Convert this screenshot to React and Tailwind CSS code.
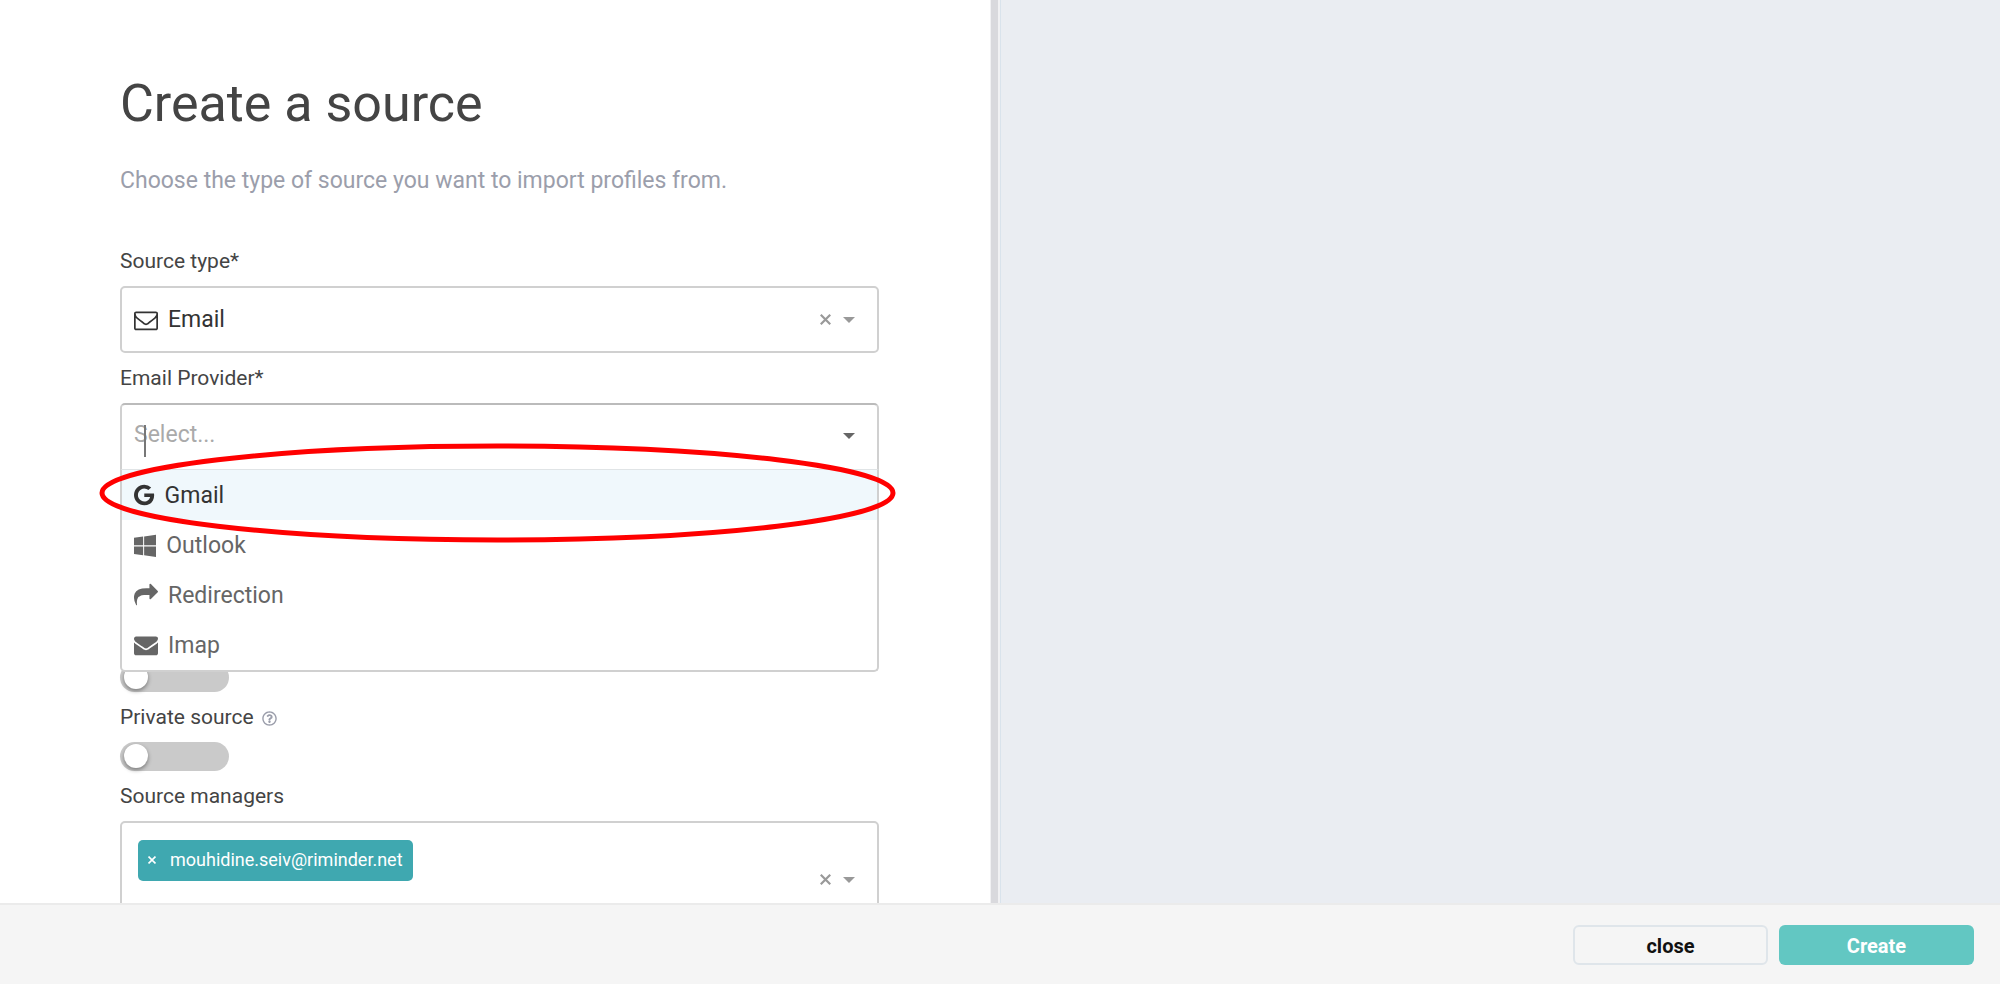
import { useState } from "react";
import { FaRegQuestionCircle } from "react-icons/fa";

const ICONS = {
  email: {
    viewBox: "0 0 1792 1792",
    d: "M1664 1504v-768q-32 36-69 66-268 206-426 338-51 43-83 67t-86.5 48.5-102.5 24.5h-2q-48 0-102.5-24.5t-86.5-48.5-83-67q-158-132-426-338-37-30-69-66v768q0 13 9.5 22.5t22.5 9.5h1472q13 0 22.5-9.5t9.5-22.5zm0-1051v-24.5l-.5-13-3-12.5-5.5-9-9-7.5-14-2.5h-1472q-13 0-22.5 9.5t-9.5 22.5q0 168 147 284 193 152 401 317 6 5 35 29.5t46 37.5 44.5 31.5 50.5 27.5 43 9h2q20 0 43-9t50.5-27.5 44.5-31.5 46-37.5 35-29.5q208-165 401-317 54-43 100.5-115.5t46.5-131.5zm128-37v1088q0 66-47 113t-113 47h-1472q-66 0-113-47t-47-113v-1088q0-66 47-113t113-47h1472q66 0 113 47t47 113z",
  },
  google: {
    viewBox: "128 0 1536 1792",
    d: "M896 786h725q12 67 12 128 0 217-91 387.5t-259.5 266.5-386.5 96q-157 0-299-60.5t-245-163.5-163.5-245-60.5-299 60.5-299 163.5-245 245-163.5 299-60.5q300 0 515 201l-209 201q-123-119-306-119-129 0-238.5 65t-173.5 176.5-64 243.5 64 243.5 173.5 176.5 238.5 65q87 0 160-24t120-60 82-82 51.5-87 22.5-78h-436v-264z",
  },
  windows: {
    viewBox: "64 0 1664 1792",
    d: "M746 1006v651l-682-94v-557h682zm0-743v659h-682v-565zm982 743v786l-907-125v-661h907zm0-878v794h-907v-669z",
  },
  share: {
    viewBox: "0 0 1792 1792",
    d: "M1792 640q0 26-19 45l-512 512q-19 19-45 19t-45-19-19-45v-256h-224q-98 0-175.5 6t-154 21.5-133 42.5-105.5 69.5-80 101-48.5 138.5-17.5 181q0 55 5 123 0 6 2.5 23.5t2.5 26.5q0 15-8.5 25t-23.5 10q-16 0-28-17-7-9-13-22t-13.5-30-10.5-24q-127-285-127-451 0-199 53-333 162-403 875-403h224v-256q0-26 19-45t45-19 45 19l512 512q19 19 19 45z",
  },
  envelope: {
    viewBox: "0 0 1792 1792",
    d: "M1792 710v794q0 66-47 113t-113 47h-1472q-66 0-113-47t-47-113v-794q44 49 101 87 362 246 497 345 57 42 92.5 65.5t94.5 48 110 24.5h2q51 0 110-24.5t94.5-48 92.5-65.5q170-123 498-345 57-39 100-87zm0-294q0 79-49 151t-122 123q-376 261-468 325-10 7-42.5 31t-54 38.5-52 32.5-57.5 27-50 9h-2q-23 0-50-9t-57.5-27-52-32.5-54-38.5-42.5-31q-91-64-262-182.5t-205-142.5q-62-42-117-115.5t-55-136.5q0-78 41.5-130t118.5-52h1472q65 0 112.5 47t47.5 113z",
  },
};

const PROVIDERS = [
  { id: "gmail", label: "Gmail", icon: "google" },
  { id: "outlook", label: "Outlook", icon: "windows" },
  { id: "redirection", label: "Redirection", icon: "share" },
  { id: "imap", label: "Imap", icon: "envelope" },
];

function Icon({ name }) {
  return (
    <svg
      viewBox={ICONS[name].viewBox}
      className="h-6 w-auto shrink-0"
      fill="currentColor"
      aria-hidden="true"
    >
      <path d={ICONS[name].d} />
    </svg>
  );
}

function Cross({ className }) {
  return (
    <svg
      viewBox="0 0 10 10"
      className={className}
      stroke="currentColor"
      strokeWidth="2"
      aria-hidden="true"
    >
      <path d="M0.7 0.7L9.3 9.3M9.3 0.7L0.7 9.3" />
    </svg>
  );
}

function Arrow({ className = "" }) {
  return (
    <svg
      viewBox="0 0 12 6"
      className={`h-1.5 w-3 ${className}`}
      fill="currentColor"
      aria-hidden="true"
    >
      <path d="M0 0H12L6 6Z" />
    </svg>
  );
}

function Label({ htmlFor, children }) {
  return (
    <label
      htmlFor={htmlFor}
      className="flex h-[50px] items-center pt-0.5 text-[21px] text-[#444]"
    >
      {children}
    </label>
  );
}

function Toggle({ id, label }) {
  return (
    <input
      id={id}
      type="checkbox"
      role="switch"
      aria-label={label}
      className="block h-[29px] w-[109px] appearance-none rounded-full bg-[#cacaca] p-0.5 pl-1 before:block before:size-6 before:rounded-full before:bg-white before:shadow-[0_2px_4px_rgba(0,0,0,0.4)] checked:bg-[#62c7c2] checked:before:ml-auto"
    />
  );
}

function ProviderField() {
  const [focused, setFocused] = useState("gmail");

  return (
    <div className="relative">
      <div className="flex h-[67px] items-center rounded-t-[5px] border-x-2 border-t-2 border-[#d0d0d0] border-t-[#bbb] pr-[22px] pb-1 pl-3">
        <input
          id="provider"
          type="text"
          role="combobox"
          aria-expanded="true"
          aria-controls="provider-menu"
          placeholder="Select..."
          className="min-w-0 flex-1 text-[23px] text-[#333] outline-none placeholder:text-[#aaa]"
        />
        <button
          type="button"
          aria-label="Toggle providers"
          className="flex items-center"
        >
          <Arrow className="text-[#666]" />
        </button>
      </div>
      {/* Text cursor */}
      <span className="absolute top-[22px] left-6 h-8 w-0.5 bg-[#777]" />

      <ul
        id="provider-menu"
        role="listbox"
        aria-label="Email providers"
        className="absolute inset-x-0 top-[66px] z-10 rounded-b-[5px] border-2 border-t border-[#d0d0d0] border-t-[#e0e4e6] bg-white"
      >
        {PROVIDERS.map((provider) => (
          <li
            key={provider.id}
            role="option"
            aria-selected={focused === provider.id}
            onMouseEnter={() => setFocused(provider.id)}
            className={`flex h-[50px] items-center gap-2.5 px-3 text-[23px] ${
              focused === provider.id
                ? "bg-[#f0f8fc] text-[#333]"
                : "text-[#666]"
            }`}
          >
            <Icon name={provider.icon} />
            <span className="pt-0.5">{provider.label}</span>
          </li>
        ))}
      </ul>

      {/* Highlight around the first option */}
      <svg
        viewBox="0 0 100 100"
        preserveAspectRatio="none"
        className="pointer-events-none absolute top-[43px] -left-[18px] z-20 h-[94px] w-[calc(100%+32px)] overflow-visible"
        fill="none"
        stroke="#f00"
        strokeWidth="5"
        aria-hidden="true"
      >
        <ellipse
          cx="50"
          cy="50"
          rx="50"
          ry="50"
          vectorEffect="non-scaling-stroke"
        />
      </svg>
    </div>
  );
}

export default function App() {
  return (
    <div className="flex h-screen flex-col bg-white pb-px font-[Roboto,sans-serif]">
      <div className="flex min-h-0 flex-1">
        <main className="flex w-1/2 overflow-hidden">
          <form className="min-w-0 flex-1 pt-[71px] pr-[111px] pl-[120px]">
            <h1 className="text-[52px] leading-[66px] text-[#444]">
              Create a source
            </h1>
            <p className="mt-7 text-[23px] leading-8 text-[#9b9eab]">
              Choose the type of source you want to import profiles from.
            </p>

            <div className="mt-[39px]">
              <Label htmlFor="source-type">Source type*</Label>
              <div className="relative">
                <select
                  id="source-type"
                  className="block h-[67px] w-full appearance-none rounded-[5px] border-2 border-[#d0d0d0] bg-white pt-0.5 pl-[46px] text-[23px] text-[#333]"
                >
                  <option>Email</option>
                </select>
                <div className="pointer-events-none absolute inset-y-0 left-3.5 flex items-center text-[#333]">
                  <Icon name="email" />
                </div>
                <div className="absolute inset-y-0 right-6 flex items-center gap-3 text-[#999]">
                  <button type="button" aria-label="Clear source type">
                    <Cross className="size-[11px]" />
                  </button>
                  <Arrow />
                </div>
              </div>
            </div>

            <Label htmlFor="provider">Email Provider*</Label>
            <ProviderField />

            <div className="mt-[193px]">
              <Toggle id="enabled" label="Enabled" />
            </div>

            <Label htmlFor="private">
              Private source
              <FaRegQuestionCircle className="ml-2 size-[15px] text-[#9b9eab]" />
            </Label>
            <Toggle id="private" label="Private source" />

            <Label htmlFor="managers">Source managers</Label>
            <div className="flex h-[117px] items-center rounded-[5px] border-2 border-[#d0d0d0] pr-[22px] pl-4">
              <span className="mb-[39px] flex h-[41px] items-center gap-3.5 rounded-[5px] bg-[#3fa8b0] px-2.5 text-lg text-white">
                <button type="button" aria-label="Remove manager">
                  <Cross className="size-2" />
                </button>
                mouhidine.seiv@riminder.net
              </span>
              <input
                id="managers"
                type="text"
                className="min-w-0 flex-1 outline-none"
              />
              <div className="flex items-center gap-3 text-[#999]">
                <button type="button" aria-label="Clear managers">
                  <Cross className="size-[11px]" />
                </button>
                <Arrow />
              </div>
            </div>
          </form>
          {/* Scrollbar */}
          <div className="w-2.5 border-r-2 border-l border-[#f1f1f3] bg-[#d9d9dd]" />
        </main>
        <aside className="flex-1 border-l border-[#d9e3ec] bg-[#eaedf2]" />
      </div>

      <footer className="flex h-[81px] items-center justify-end gap-[11px] border-t-2 border-[#ebebeb] bg-[#f5f5f5] pr-[26px]">
        <button
          type="button"
          className="h-10 w-[195px] rounded-md border-2 border-[#dfe5ea] pt-0.5 text-xl font-bold text-[#111]"
        >
          close
        </button>
        <button
          type="submit"
          className="h-10 w-[195px] rounded-md bg-[#62c7c2] pt-0.5 text-xl font-bold text-white"
        >
          Create
        </button>
      </footer>
    </div>
  );
}
